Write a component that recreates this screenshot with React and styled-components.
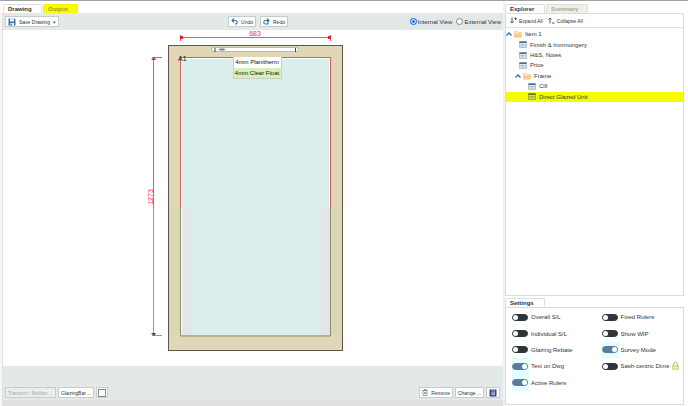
import React, { useState } from 'react'
import styled, { createGlobalStyle } from 'styled-components'

const TREE = [
  { id: 'item', label: 'Item 1', level: 0, folder: true },
  { id: 'finish', label: 'Finish & Ironmongery', level: 1 },
  { id: 'notes', label: 'H&S, Notes', level: 1 },
  { id: 'price', label: 'Price', level: 1 },
  { id: 'frame', label: 'Frame', level: 1, folder: true },
  { id: 'cill', label: 'Cill', level: 2 },
  { id: 'dgu', label: 'Direct Glazed Unit', level: 2 },
]

const SETTINGS = [
  { id: 'overall', label: 'Overall S/L' },
  { id: 'fixed', label: 'Fixed Rulers' },
  { id: 'individual', label: 'Individual S/L' },
  { id: 'wip', label: 'Show WIP' },
  { id: 'rebate', label: 'Glazing Rebate' },
  { id: 'survey', label: 'Survey Mode', on: true },
  { id: 'text', label: 'Text on Dwg', on: true },
  { id: 'sash', label: 'Sash-centric Dims', locked: true },
  { id: 'active', label: 'Active Rulers', on: true },
]

const SaveIcon = () => (
  <svg width="8" height="8" viewBox="0 0 16 16">
    <path d="M1 1h12l2 2v12H1z" fill="#3f78a8" />
    <path d="M4 1h8v6H4z" fill="#e8f2fa" />
    <path d="M4 10h8v5H4z" fill="#fff" />
    <path d="M5 11h3v4H5z" fill="#3f78a8" />
  </svg>
)

const UndoIcon = () => (
  <svg width="7" height="7" viewBox="0 0 14 14" fill="none" stroke="#2b78b4" strokeWidth="2.2">
    <path d="M2 5h6c3 0 4.500 1.500 4.500 3.500S11 12 8 12" />
    <path d="M6 1L2 5l4 4" />
  </svg>
)

const RedoIcon = () => (
  <svg width="7" height="7" viewBox="0 0 14 14" fill="none" stroke="#2b78b4" strokeWidth="2.2">
    <path d="M12 5H5C3 5 1.500 6.500 1.500 8.500S3 12 5 12h5V9" />
    <path d="M8 1l4 4-4 4" />
  </svg>
)

const ExpandIcon = () => (
  <svg width="7" height="7" viewBox="0 0 14 14" fill="none" stroke="#3a5674" strokeWidth="2">
    <path d="M4 1v11M1 9l3 3 3-3" />
    <path d="M11 1v5M8.500 3.500h5" />
  </svg>
)

const CollapseIcon = () => (
  <svg width="7" height="7" viewBox="0 0 14 14" fill="none" stroke="#3a5674" strokeWidth="2">
    <path d="M4 13V2M1 5l3-3 3 3" />
    <path d="M8 12h5" />
  </svg>
)

const ChevronIcon = () => (
  <svg width="6" height="6" viewBox="0 0 12 12" fill="none" stroke="#2f6fa8" strokeWidth="2.800">
    <path d="M1 9l5-5 5 5" />
  </svg>
)

const FolderIcon = () => (
  <svg width="8" height="8" viewBox="0 0 16 16">
    <path d="M1 3h5l2 2h6v9H1z" fill="#fbe6c0" stroke="#eab768" />
    <path d="M4 8h12l-2 6H1z" fill="#fdd08c" stroke="#eab768" />
  </svg>
)

const FormIcon = ({ active }) => (
  <svg width="8" height="7" viewBox="0 0 16 14">
    <path d="M1 1h14v12H1z" fill={active ? '#d9e24a' : '#e4edf5'} stroke={active ? '#5f7428' : '#7d93aa'} />
    <path d="M1 1h14v3H1z" fill={active ? '#5f7428' : '#46698c'} />
    <path d="M3 7h10M3 10h10" stroke={active ? '#6f842c' : '#6d8db0'} strokeWidth="1.500" strokeDasharray="2 1" />
  </svg>
)

const BinIcon = () => (
  <svg width="6" height="7" viewBox="0 0 12 14" fill="none" stroke="#6f7478" strokeWidth="1.400">
    <path d="M1 3h10M4 3V1h4v2M2 3v10h8V3M5 6v4M7.500 6v4" />
  </svg>
)

const BookIcon = () => (
  <svg width="8" height="8" viewBox="0 0 16 16">
    <path d="M1 1h14v14H1z" fill="#38428c" />
    <path d="M5 3h7v9H5z" fill="#b7bfe6" />
    <path d="M6 5h5M6 8h5" stroke="#38428c" strokeWidth="1.500" />
  </svg>
)

const LockIcon = () => (
  <svg width="7" height="8" viewBox="0 0 14 16" fill="none">
    <path d="M3 8V5a4 4 0 0 1 8 0v3" stroke="#a9a98a" strokeWidth="1.800" />
    <path d="M1.500 7.500h11v7h-11z" fill="#f3ee9c" stroke="#c3b840" strokeWidth="1.500" />
  </svg>
)

const WindowDrawing = () => (
  <Drawing viewBox="0 0 500 336" role="img" aria-label="Window drawing">
    {/* outer frame */}
    <rect x="165" y="15" width="175" height="305" fill="#e1d6b6" />
    <rect x="165" y="178" width="12" height="128" fill="#d9d8b4" />
    <rect x="328" y="178" width="12" height="128" fill="#d9d8b4" />
    <rect x="165.500" y="15.500" width="174" height="305" fill="none" stroke="#5c564c" />
    {/* glass */}
    <rect x="178" y="28" width="149" height="277" fill="#fff" />
    <rect x="179" y="29" width="147" height="276" fill="#daefec" />
    <rect x="179" y="178" width="10" height="127" fill="#e3e6e9" />
    <rect x="317" y="178" width="10" height="127" fill="#e3e6e9" />
    <path d="M177.500 178V27.500h150V178" fill="none" stroke="#c8605a" />
    <path d="M177.500 178v128h150V178" fill="none" stroke="#948a68" />
    {/* trickle vent */}
    <rect x="208.500" y="17.500" width="87" height="4" rx="2" fill="#fff" stroke="#9a958a" strokeWidth="0.600" />
    <path d="M212 18v4M292.500 18v4" stroke="#444" />
    <path d="M215 19.500l3-1.500v3zM223 19.500l-3-1.500v3z" fill="#999" />
    <circle cx="219" cy="19.500" r="1" fill="#555" />
    {/* width ruler */}
    <path d="M177 7.500h150M177.500 5v6M327.500 5v6" stroke="#f2545c" fill="none" />
    <path d="M177 6h3v3h-3zM325 6h3v3h-3z" fill="#e8202c" />
    {/* height ruler */}
    <path d="M150.500 28V178M149 27.500h10" stroke="#f0565c" fill="none" />
    <path d="M150.500 178v127M149 305.500h10" stroke="#a89478" fill="none" />
    <path d="M148 30l3-3 2 3z" fill="#e8202c" />
    <path d="M148 303h5l-2 3z" fill="#5e3c20" />
    <DimText x="252" y="6" textAnchor="middle">683</DimText>
    <DimText transform="translate(150 167) rotate(-90)" textAnchor="middle">1273</DimText>
    <MarkText x="175" y="31">A1</MarkText>
    <rect x="231" y="27" width="47" height="11" fill="#fff" />
    <rect x="231" y="38" width="47" height="10" fill="#d5f0b8" />
    <path d="M230.500 27v21.500h48V27" fill="none" stroke="#c5cfc2" />
    <NoteText x="254" y="34" textAnchor="middle">4mm Planitherm</NoteText>
    <NoteText x="254" y="45" textAnchor="middle">4mm Clear Float</NoteText>
  </Drawing>
)

const App = () => {
  const [view, setView] = useState('internal')
  const [selected, setSelected] = useState('dgu')

  return (
    <Page>
      <GlobalStyle />
      <Rail />
      <Workspace>
        <Tabs>
          <Tab $active $width={39}>Drawing</Tab>
          <Tab $marked $width={35}>Output</Tab>
        </Tabs>
        <Toolbar>
          <Button><SaveIcon />Save Drawing <Caret>▾</Caret></Button>
          <History>
            <Button><UndoIcon />Undo</Button>
            <Button><RedoIcon />Redo</Button>
          </History>
          <Views>
            <ViewLabel>
              <Radio type="radio" name="view" checked={view === 'internal'} onChange={() => setView('internal')} />
              Internal View
            </ViewLabel>
            <ViewLabel>
              <Radio type="radio" name="view" checked={view === 'external'} onChange={() => setView('external')} />
              External View
            </ViewLabel>
          </Views>
        </Toolbar>
        <Canvas>
          <WindowDrawing />
        </Canvas>
        <Footer>
          <Button disabled>Transom / Mullion ...</Button>
          <Button>GlazingBar ...</Button>
          <BoxHolder><SmallBox type="checkbox" aria-label="Glazing bar" /></BoxHolder>
          <Spacer />
          <Button><BinIcon />Remove</Button>
          <Button>Change ...</Button>
          <Button aria-label="Notes"><BookIcon /></Button>
        </Footer>
      </Workspace>
      <Sidebar>
        <Tabs>
          <Tab $active $width={40}>Explorer</Tab>
          <Tab $width={42}>Summary</Tab>
        </Tabs>
        <Explorer>
          <TreeTools>
            <TreeTool><ExpandIcon />Expand All</TreeTool>
            <TreeTool><CollapseIcon />Collapse All</TreeTool>
          </TreeTools>
          <Tree>
            {TREE.map((node) => (
              <TreeRow
                key={node.id}
                $level={node.level}
                $folder={node.folder}
                $selected={selected === node.id}
                onClick={() => setSelected(node.id)}
              >
                {node.folder && <ChevronIcon />}
                {node.folder ? <FolderIcon /> : <FormIcon active={selected === node.id} />}
                <span>{node.label}</span>
              </TreeRow>
            ))}
          </Tree>
        </Explorer>
        <SettingsTabs>
          <Tab $active $width={40}>Settings</Tab>
        </SettingsTabs>
        <Settings>
          {SETTINGS.map((item) => (
            <Setting key={item.id}>
              <Switch type="checkbox" defaultChecked={item.on} />
              {item.label}
              {item.locked && <LockIcon />}
            </Setting>
          ))}
        </Settings>
      </Sidebar>
    </Page>
  )
}

export default App

const GlobalStyle = createGlobalStyle`
  * {
    box-sizing: border-box;
  }
  body {
    margin: 0;
    background: #fff;
    color: #333;
    font: 6px/8px "Liberation Sans", Arial, sans-serif;
  }
  button, input {
    font: inherit;
    color: inherit;
    margin: 0;
  }
  svg {
    flex-shrink: 0;
  }
`;

const Page = styled.div`
  display: flex;
  min-height: 100vh;
  border-top: 1px solid #9da2a2;
`;

const Rail = styled.div`
  width: 3px;
  margin-top: 12px;
  background: #f5f6f6;
  border-right: 1px solid #dde1e1;
`;

const Workspace = styled.main`
  flex: 1;
  display: flex;
  flex-direction: column;
  border-bottom: 6px solid #e0e0e0;
`;

const Tabs = styled.div`
  display: flex;
  gap: 1px;
  height: 12px;
  padding-top: 3px;
`;

const Tab = styled.button`
  width: ${props => props.$width}px;
  padding: 0 0 0 4px;
  border: 1px solid ${props => props.$marked ? '#f4f400' : '#dcdfdf'};
  border-bottom: 0;
  border-radius: 2px 2px 0 0;
  text-align: left;
  font-weight: bold;
  background: ${props => props.$marked ? '#fbfb00' : props.$active ? '#fff' : '#f0f0e5'};
  color: ${props => props.$marked ? '#a0a034' : props.$active ? '#333' : '#aaa99a'};
`;

const Toolbar = styled.div`
  display: grid;
  grid-template-columns: 1fr auto 1fr;
  align-items: center;
  justify-items: start;
  height: 17px;
  padding: 0 2px;
  background: #e2e9e8;
`;

const Button = styled.button`
  display: flex;
  align-items: center;
  gap: 3px;
  height: 11px;
  padding: 0 2px;
  border: 1px solid #c6cccc;
  background: #fff;
  font-size: 5px;
  white-space: nowrap;

  &:disabled {
    background: #e9eeed;
    color: #a4aaaa;
  }
`;

const Caret = styled.span`
  color: #555;
`;

const History = styled.div`
  display: flex;
  gap: 4px;
  margin-left: 10px;
`;

const Views = styled.div`
  display: flex;
  gap: 4px;
  justify-self: end;
`;

const ViewLabel = styled.label`
  display: flex;
  align-items: center;
  gap: 1px;
`;

const Radio = styled.input`
  appearance: none;
  width: 7px;
  height: 7px;
  border: 1px solid #7f8585;
  border-radius: 50%;
  background: #fff;

  &:checked {
    border-color: #1a73e8;
    background: #1a73e8;
    box-shadow: inset 0 0 0 1px #fff;
  }
`;

const Canvas = styled.div`
  flex: 1;
  display: flex;
  background: #fff;
`;

const Drawing = styled.svg`
  width: 100%;
`;

const DimText = styled.text`
  font-size: 7px;
  fill: #ee3340;
`;

const NoteText = styled.text`
  font-size: 6px;
  fill: #111;
`;

const MarkText = styled.text`
  font-size: 7px;
  fill: #111;
`;

const Footer = styled.div`
  display: flex;
  align-items: flex-end;
  gap: 2px;
  height: 34px;
  padding: 0 3px 2px 2px;
  background: #e2e9e8;
`;

const BoxHolder = styled.label`
  display: flex;
  align-items: center;
  justify-content: center;
  width: 12px;
  height: 11px;
  border: 1px solid #ccd2d2;
  background: #f2f4f4;
`;

const SmallBox = styled.input`
  appearance: none;
  width: 8px;
  height: 8px;
  border: 1px solid #888d8d;
  background: #fff;
`;

const Spacer = styled.div`
  flex: 1;
`;

const Sidebar = styled.aside`
  display: flex;
  flex-direction: column;
  width: 185px;
  padding: 0 4px 1px 2px;
  background: linear-gradient(to right, #f0f2f2 2px, #fff 2px);
`;

const Explorer = styled.section`
  flex: 1;
  border: 1px solid #d9dcdc;
`;

const TreeTools = styled.div`
  display: flex;
  gap: 5px;
  height: 14px;
  padding: 0 4px;
  border-bottom: 1px solid #dfe2e2;
`;

const TreeTool = styled.button`
  display: flex;
  align-items: center;
  gap: 2px;
  padding: 0;
  border: 0;
  background: none;
  font-size: 5px;
`;

const Tree = styled.ul`
  display: grid;
  grid-auto-rows: 1fr;
  height: 73px;
  margin: 1px 0 0;
  padding: 0;
  list-style: none;
`;

const TreeRow = styled.li`
  display: flex;
  align-items: center;
  gap: 2px;
  padding-left: ${props => props.$level * 9 + (props.$folder ? 0 : 4)}px;
  background: ${props => props.$selected ? '#f5fb00' : 'none'};
  cursor: pointer;

  span {
    margin-left: 1px;
  }
`;

const SettingsTabs = styled(Tabs)`
  margin-top: -1px;
`;

const Settings = styled.section`
  display: grid;
  grid-template-columns: 1fr 1fr;
  grid-auto-rows: 1fr;
  column-gap: 8px;
  height: 98px;
  padding: 1px 0 13px 6px;
  border: 1px solid #d9dcdc;
`;

const Setting = styled.label`
  display: flex;
  align-items: center;
  gap: 3px;
  white-space: nowrap;

  &:has(input:checked) {
    background: linear-gradient(#e4fdfd, #e4fdfd) no-repeat 0 0 / 17px 100%;
  }
`;

const Switch = styled.input`
  appearance: none;
  display: flex;
  width: 16px;
  height: 7px;
  border: 1px solid #2f3639;
  border-radius: 4px;
  background: #2f3639;

  &::before {
    content: '';
    width: 5px;
    height: 5px;
    border-radius: 50%;
    background: #fff;
  }

  &:checked {
    justify-content: flex-end;
    border-color: #5b7aa0;
    background: #5b7aa0;
  }
`;
